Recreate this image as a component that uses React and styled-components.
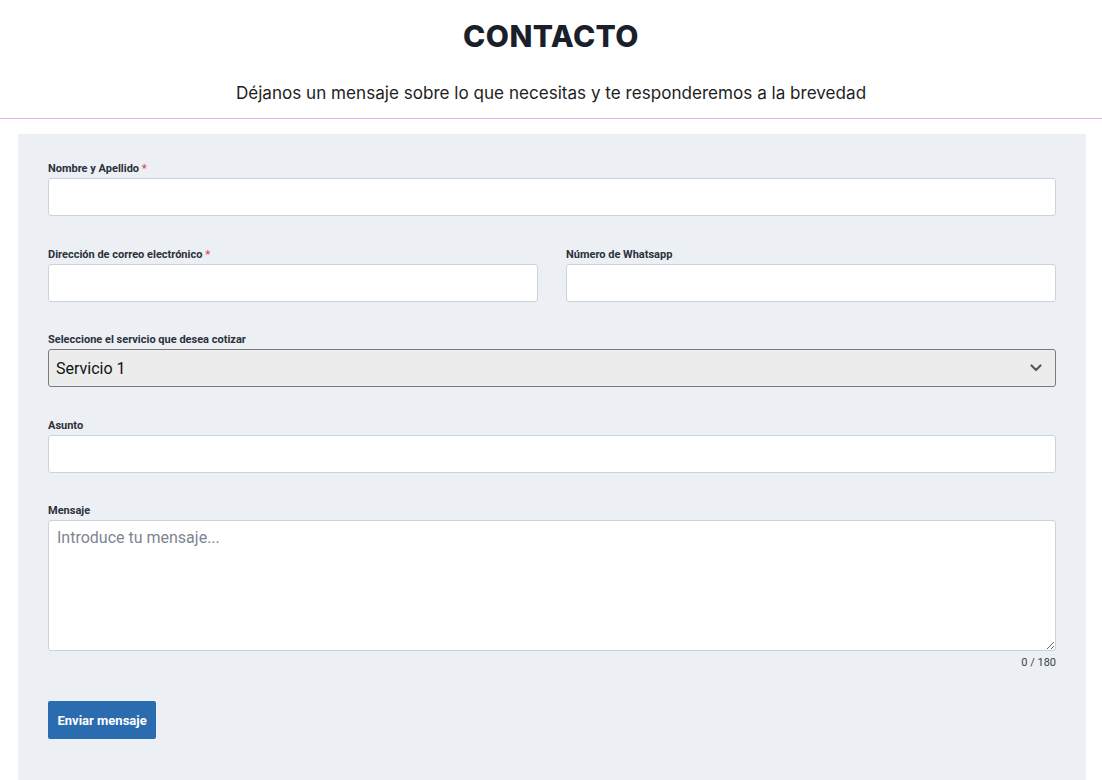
import React from 'react';
import styled, { createGlobalStyle } from 'styled-components';

const GlobalStyle = createGlobalStyle`
	html, body {
		margin: 0;
		padding: 0;
		background: #fff;
	}
	body {
		font-family: Roboto, 'Liberation Sans', sans-serif;
	}
`;

export default function App() {
	return (
		<Page>
			<GlobalStyle />
			<Header>
				<Title>CONTACTO</Title>
				<Subtitle>Déjanos un mensaje sobre lo que necesitas y te responderemos a la brevedad</Subtitle>
			</Header>
			<Panel>
				<Field>
					<Label>
						Nombre y Apellido <Required>*</Required>
					</Label>
					<Input type="text" />
				</Field>
				<Row>
					<Field>
						<Label>
							Dirección de correo electrónico <Required>*</Required>
						</Label>
						<Input type="email" />
					</Field>
					<Field>
						<Label>Número de Whatsapp</Label>
						<Input type="text" />
					</Field>
				</Row>
				<Field>
					<Label>Seleccione el servicio que desea cotizar</Label>
					<SelectWrap>
						<Select defaultValue="1">
							<option value="1">Servicio 1</option>
							<option value="2">Servicio 2</option>
						</Select>
						<Chevron viewBox="0 0 12 8" aria-hidden="true">
							<path d="M1.5 1.5 L6 6 L10.5 1.5" fill="none" stroke="#5a5a5a" strokeWidth="2.2" strokeLinecap="round" strokeLinejoin="round" />
						</Chevron>
					</SelectWrap>
				</Field>
				<Field>
					<Label>Asunto</Label>
					<Input type="text" />
				</Field>
				<Field $last>
					<Label>Mensaje</Label>
					<TextArea placeholder="Introduce tu mensaje..." />
					<Counter>0 / 180</Counter>
				</Field>
				<SubmitButton type="button">Enviar mensaje</SubmitButton>
			</Panel>
		</Page>
	);
}

const Page = styled.div`
	width: 100%;
	min-height: 780px;
	background: #fff;
`;

const Header = styled.header`
	display: flex;
	flex-direction: column;
	align-items: center;
	padding-top: 17px;
	height: 101px;
	border-bottom: 1px solid #f3a6f6;
	box-sizing: content-box;
`;

const Title = styled.h1`
	margin: 0;
	font-family: Inter, 'Open Sans', sans-serif;
	font-weight: 800;
	font-size: 30px;
	line-height: 38px;
	letter-spacing: 0.4px;
	color: #1b1f2b;
`;

const Subtitle = styled.p`
	margin: 26px 0 0;
	font-family: Inter, 'Open Sans', sans-serif;
	font-weight: 400;
	font-size: 17.1px;
	line-height: 24px;
	color: #1e1e1e;
`;

const Panel = styled.form`
	margin: 15px 16px 0 18px;
	padding: 26px 30px 40px;
	background: #ecf0f4;
	min-height: 680px;
	box-sizing: border-box;
`;

const Row = styled.div`
	display: grid;
	grid-template-columns: 1fr 1fr;
	column-gap: 28px;
`;

const Field = styled.div`
	display: flex;
	flex-direction: column;
	margin-bottom: ${({ $last }) => ($last ? '31px' : '29.5px')};
`;

const Label = styled.label`
	font-family: Roboto, 'Liberation Sans', sans-serif;
	font-weight: 700;
	font-size: 11px;
	line-height: 17px;
	color: #2b313b;
	margin-bottom: 1px;
`;

const Required = styled.span`
	color: #e2485c;
`;

const Input = styled.input`
	height: 38px;
	box-sizing: border-box;
	border: 1px solid #c9d3de;
	border-radius: 3px;
	background: #fff;
	padding: 0 8px;
	font-family: Roboto, 'Liberation Sans', sans-serif;
	font-size: 16px;
	outline: none;
`;

const SelectWrap = styled.div`
	position: relative;
`;

const Select = styled.select`
	width: 100%;
	height: 38px;
	box-sizing: border-box;
	appearance: none;
	-webkit-appearance: none;
	border: 1px solid #7b7b7b;
	border-radius: 3px;
	background: #ececec;
	padding: 0 7px;
	font-family: Roboto, 'Liberation Sans', sans-serif;
	font-size: 16px;
	color: #111;
	outline: none;
`;

const Chevron = styled.svg`
	position: absolute;
	right: 14px;
	top: 15px;
	width: 12px;
	height: 8px;
	pointer-events: none;
`;

const TextArea = styled.textarea`
	height: 131px;
	box-sizing: border-box;
	border: 1px solid #c9d3de;
	border-radius: 3px;
	background: #fff;
	padding: 6px 8px;
	font-family: Roboto, 'Liberation Sans', sans-serif;
	font-size: 16px;
	line-height: 22px;
	resize: vertical;
	outline: none;
	&::placeholder {
		color: #7c8593;
	}
`;

const Counter = styled.div`
	margin-top: 5px;
	text-align: right;
	font-family: Roboto, 'Liberation Sans', sans-serif;
	font-size: 11px;
	line-height: 14px;
	color: #3a3f47;
`;

const SubmitButton = styled.button`
	height: 38px;
	padding: 0 9.5px;
	border: 0;
	border-radius: 2px;
	background: #2b6cb0;
	color: #fff;
	font-family: Roboto, 'Liberation Sans', sans-serif;
	font-weight: 700;
	font-size: 13px;
	cursor: pointer;
`;
